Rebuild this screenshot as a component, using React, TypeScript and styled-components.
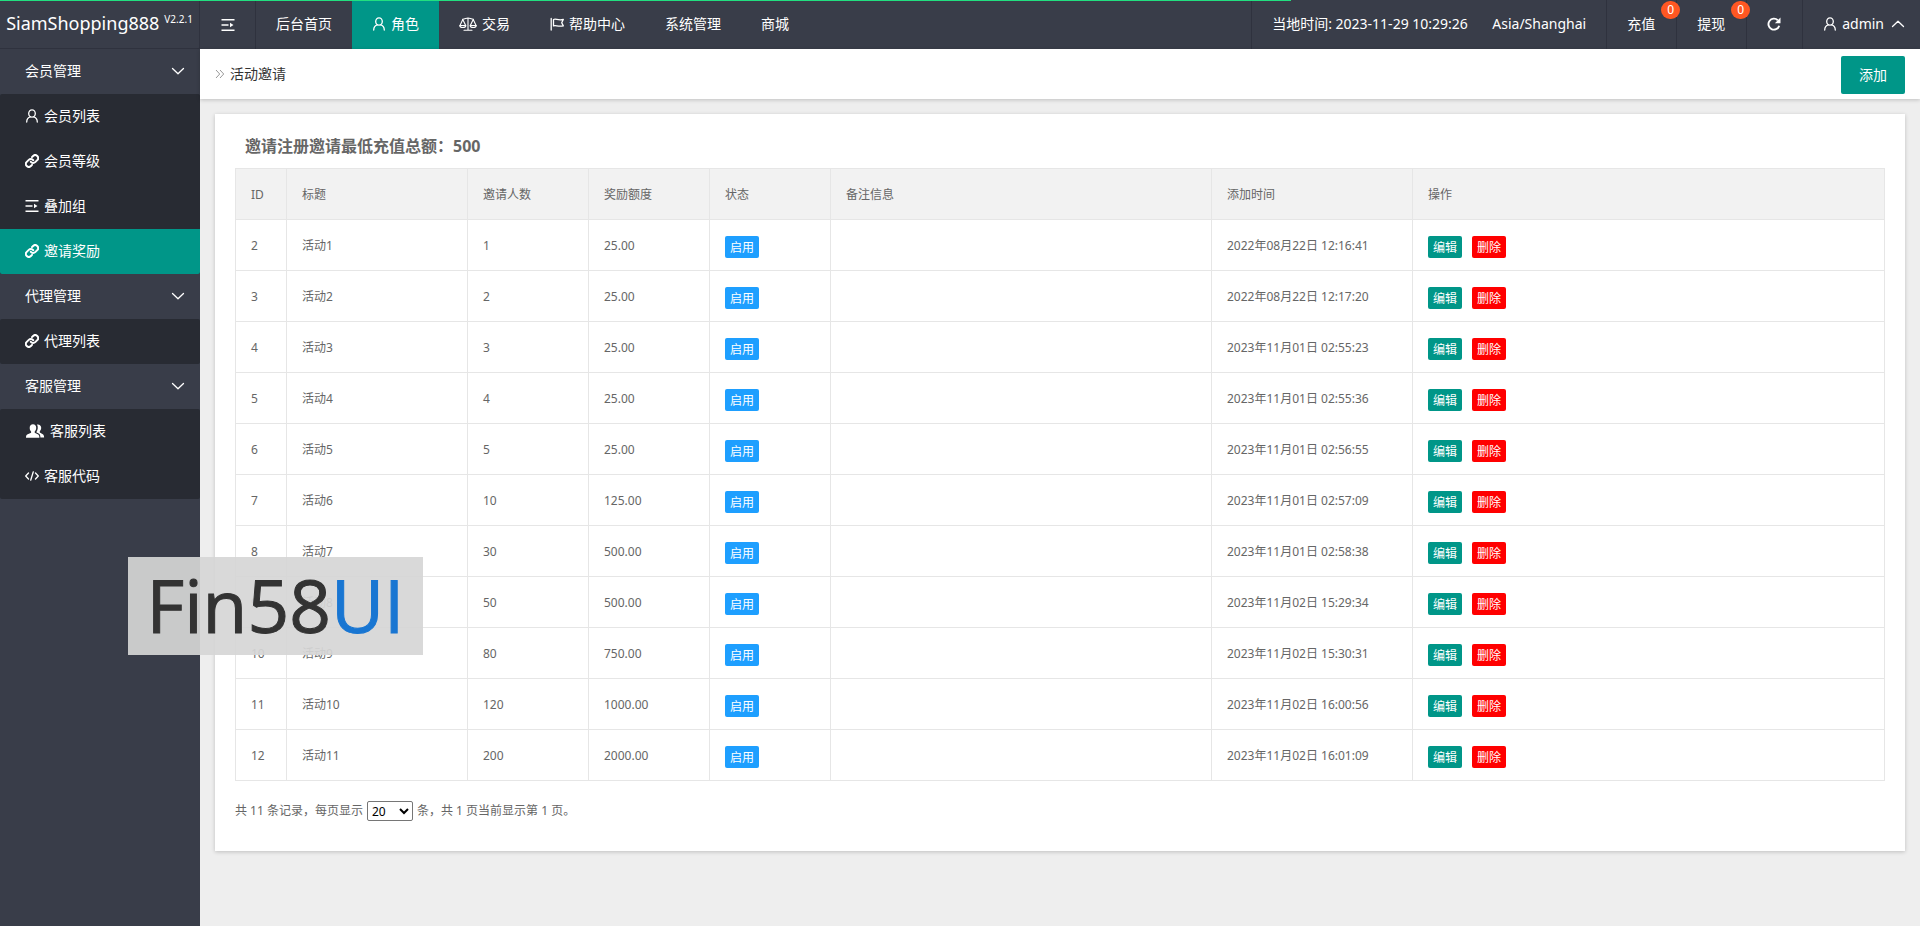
import React from 'react';
import styled, { createGlobalStyle, css } from 'styled-components';

const color = {
  dark: '#393d49',
  darker: '#282b33',
  line: '#2f323e',
  teal: '#009688',
  blue: '#1e9fff',
  red: '#ff0000',
  orange: '#ff5722',
  border: '#e6e6e6',
  text: '#666',
};

const GlobalStyle = createGlobalStyle`
  * { box-sizing: border-box; }
  body {
    margin: 0;
    background: #eee;
    color: ${color.text};
    font: 14px/24px 'Noto Sans', 'Noto Sans CJK SC', sans-serif;
  }
  a { color: inherit; text-decoration: none; }
  button { font: inherit; border: 0; cursor: pointer; }
  ul { margin: 0; padding: 0; list-style: none; }
`;

const Page = styled.div`
  display: flex;
  flex-direction: column;
  min-height: 100vh;
`;

const Progress = styled.div`
  position: absolute;
  top: 0;
  left: 0;
  width: 67.25%;
  height: 1px;
  background: #22df80;
`;

const Header = styled.header`
  display: flex;
  height: 49px;
  background: ${color.dark};
  color: #fff;
`;

const Logo = styled.h1`
  display: flex;
  align-items: center;
  justify-content: center;
  gap: 5px;
  flex: none;
  width: 200px;
  margin: 0;
  padding-bottom: 2px;
  border-right: 1px solid ${color.line};
  border-bottom: 1px solid ${color.line};
  font-size: 18px;
  font-weight: 400;
  sup {
    align-self: flex-start;
    padding-top: 13px;
    font-size: 10px;
    line-height: 12px;
  }
`;

const HeaderNav = styled.nav`
  display: flex;
  flex: 1;
`;

const headerItem = css`
  display: flex;
  align-items: center;
  gap: 5px;
  height: 49px;
  padding: 0 20px 2px;
  white-space: nowrap;
`;

const HeaderLink = styled.a<{ $active?: boolean }>`
  ${headerItem}
  background: ${(p) => (p.$active ? color.teal : 'transparent')};
`;

const Collapse = styled.button`
  ${headerItem}
  justify-content: center;
  width: 56px;
  padding: 0;
  border-right: 1px solid ${color.line};
  background: none;
  color: #fff;
`;

const Tools = styled.div`
  display: flex;
`;

const ToolLink = styled.a`
  ${headerItem}
  position: relative;
  padding-right: 21px;
  border-left: 1px solid ${color.line};
`;

const ToolButton = styled.button`
  ${headerItem}
  padding-right: 21px;
  border-left: 1px solid ${color.line};
  background: none;
  color: #fff;
`;

const Account = styled(ToolLink)`
  padding-right: 15px;
  svg:last-child { margin-left: 2px; }
`;

const Clock = styled.div`
  ${headerItem}
  justify-content: space-between;
  min-width: 355px;
  border-left: 1px solid ${color.line};
`;

const Count = styled.span`
  position: absolute;
  top: 1px;
  right: -4px;
  z-index: 1;
  width: 19px;
  height: 18px;
  border-radius: 9px;
  background: ${color.orange};
  font-size: 12px;
  line-height: 18px;
  text-align: center;
`;

const Body = styled.div`
  display: flex;
  flex: 1;
`;

const Sidebar = styled.aside`
  flex: none;
  width: 200px;
  background: ${color.dark};
  color: #fff;
`;

const GroupTitle = styled.button`
  display: flex;
  align-items: center;
  justify-content: space-between;
  width: 100%;
  height: 45px;
  padding: 0 15px 1px 25px;
  background: none;
  color: #fff;
`;

const SubMenu = styled.ul`
  overflow: hidden;
  border-radius: 2px;
  background: ${color.darker};
`;

const SubLink = styled.a<{ $active?: boolean }>`
  display: flex;
  align-items: center;
  gap: 5px;
  height: 45px;
  padding: 0 0 1px 25px;
  background: ${(p) => (p.$active ? color.teal : 'transparent')};
`;

const Main = styled.main`
  flex: 1;
  min-width: 0;
`;

const TitleBar = styled.div`
  display: flex;
  align-items: center;
  justify-content: space-between;
  height: 50px;
  padding: 0 15px;
  background: #fff;
  box-shadow: 0 1px 4px rgba(0, 0, 0, 0.2);
`;

const Crumb = styled.h2`
  display: flex;
  align-items: center;
  gap: 5px;
  margin: 0;
  color: #333;
  font-size: 14px;
  font-weight: 400;
`;

const AddButton = styled.button`
  height: 38px;
  margin-top: 2px;
  padding: 0 18px 1px;
  border-radius: 2px;
  background: ${color.teal};
  color: #fff;
`;

const Card = styled.section`
  margin: 15px;
  padding: 20px 20px 28px;
  background: #fff;
  box-shadow: 0 1px 4px rgba(0, 0, 0, 0.2);
`;

const CardTitle = styled.h3`
  margin: 0 0 10px;
  padding-left: 10px;
  font-size: 16px;
  line-height: 24px;
  font-weight: 700;
`;

const Table = styled.table`
  width: 100%;
  border-collapse: collapse;
  table-layout: fixed;
  font-size: 12px;
  line-height: 20px;
  th, td {
    height: 51px;
    padding: 2px 15px 0;
    border: 1px solid ${color.border};
    font-weight: 400;
    text-align: left;
  }
  thead { background: #f2f2f2; }
`;

const Actions = styled.div`
  display: flex;
  gap: 10px;
  padding-top: 1px;
`;

const Tag = styled.button<{ $tone: string }>`
  height: 22px;
  padding: 1px 5px 0;
  border-radius: 2px;
  background: ${(p) => p.$tone};
  color: #fff;
  line-height: 21px;
`;

const Pager = styled.div`
  display: flex;
  align-items: center;
  gap: 4px;
  margin-top: 18px;
  font-size: 12px;
  select {
    width: 46px;
    height: 20px;
    padding: 0;
    border: 1px solid #767676;
    border-radius: 2px;
    background: #fff;
    color: #000;
    font: inherit;
    line-height: 16px;
  }
`;

const Watermark = styled.div`
  position: absolute;
  top: 557px;
  left: 128px;
  z-index: 2;
  width: 295px;
  height: 98px;
  background: rgba(214, 214, 214, 0.92);
  color: #333;
  font: 73px/96px 'Open Sans', sans-serif;
  -webkit-text-stroke: 1px currentColor;
  text-align: center;
  span { color: #1976d2; }
`;

const stroke = { fill: 'none', stroke: 'currentColor', strokeLinecap: 'round', strokeLinejoin: 'round' } as const;

const UserIcon = () => (
  <svg width="14" height="14" viewBox="0 0 14 14" {...stroke} strokeWidth="1.3">
    <ellipse cx="7" cy="4.5" rx="3.3" ry="3.7" />
    <path d="M1.7 13c.1-2.9 1.4-4.7 3.6-5.2M8.7 7.8c2.2.5 3.5 2.3 3.6 5.2" />
  </svg>
);
const ShrinkIcon = () => (
  <svg width="14" height="14" viewBox="0 0 14 14" fill="currentColor">
    <path d="M.5 1h13v1.600H.5zM.5 6.200h7v1.600h-7zM.5 11.400h13V13H.5zM9 4.700l3.500 2.300L9 9.300z" />
  </svg>
);
const ScaleIcon = () => (
  <svg width="18" height="14" viewBox="0 0 18 14" {...stroke} strokeWidth="1.1">
    <path d="M9 1v12M5 13.300h8M3.500 2.300C6 2.300 7 1 9 1s3 1.300 5.500 1.300M3.800 2.500 1 8.500M3.800 2.500l2.900 6M14.200 2.500l-2.900 6M14.200 2.500l2.900 6" />
    <path d="M.8 8.500h6c0 2.700-6 2.700-6 0zM11.200 8.500h6c0 2.700-6 2.700-6 0z" />
  </svg>
);
const FlagIcon = () => (
  <svg width="14" height="14" viewBox="0 0 14 14" {...stroke} strokeWidth="1.3">
    <path d="M1.200 1.500v11.500M3.500 2.500c2.500-1.200 4 1.200 9.800 0l-1.600 3.200 1.600 3.200c-5.800 1.200-7.300-1.200-9.800 0z" />
  </svg>
);
const RefreshIcon = () => (
  <svg width="14" height="14" viewBox="0 0 14 14" fill="none" stroke="currentColor" strokeWidth="1.9">
    <path d="M12.200 8.800A5.500 5.500 0 1 1 10.800 3.200" />
    <path d="M13.500.6v5.600H7.900z" fill="currentColor" stroke="none" />
  </svg>
);
const LinkIcon = () => (
  <svg width="14" height="14" viewBox="0 0 24 24" {...stroke} strokeWidth="3.4">
    <path d="M10 13.500a5 5 0 0 0 7.500.5l3.500-3.500a5 5 0 0 0-7.100-7.100l-2 2" />
    <path d="M14 10.500a5 5 0 0 0-7.500-.5L3 13.500a5 5 0 0 0 7.100 7.100l2-2" />
  </svg>
);
const GroupIcon = () => (
  <svg width="20" height="14" viewBox="0 0 20 14" fill="currentColor">
    <path d="M8 .3c2 0 3.200 1.500 3.200 3.400 0 1.600-.7 2.900-1.500 3.700v1.300l3.500 1.700c.8.400 1.200 1.600 1.200 3.300H1c0-1.800.4-2.900 1.200-3.300l3.900-1.700V7.400C5.200 6.600 4.700 5.300 4.700 3.700 4.700 1.800 6 .3 8 .3z" />
    <path d="M12 .5c2.400-.4 4.200 1 4.200 3.300 0 1.500-.6 2.700-1.400 3.500v1.200l3 1.700c.9.500 1.300 1.700 1.300 3.400h-3.700c0-2.300-.5-3.500-1.700-4.100L11.300 8.200c1.700-2.600 2-5.500.7-7.700z" />
  </svg>
);
const CodeIcon = () => (
  <svg width="14" height="14" viewBox="0 0 14 14" {...stroke} strokeWidth="1.3">
    <path d="M3.500 4 .7 7l2.800 3M10.500 4l2.800 3-2.800 3M8.300 2.800 5.700 11.200" />
  </svg>
);
const Chevron = ({ up = false }: { up?: boolean }) => (
  <svg width="14" height="14" viewBox="0 0 14 14" {...stroke} strokeWidth="1.3">
    <path d={up ? 'M1.500 9.500 7 4.200l5.500 5.300' : 'M1.500 4.500 7 9.800l5.500-5.300'} />
  </svg>
);
const DoubleArrow = () => (
  <svg width="10" height="12" viewBox="0 0 10 12" fill="none" stroke="#999" strokeWidth="1">
    <path d="M1 2l3.700 4L1 10M5 2l3.700 4L5 10" />
  </svg>
);

const topLinks = [
  { label: '后台首页' },
  { label: '角色', icon: <UserIcon />, active: true },
  { label: '交易', icon: <ScaleIcon /> },
  { label: '帮助中心', icon: <FlagIcon /> },
  { label: '系统管理' },
  { label: '商城' },
];

const groups = [
  {
    title: '会员管理',
    items: [
      { label: '会员列表', icon: <UserIcon /> },
      { label: '会员等级', icon: <LinkIcon /> },
      { label: '叠加组', icon: <ShrinkIcon /> },
      { label: '邀请奖励', icon: <LinkIcon />, active: true },
    ],
  },
  { title: '代理管理', items: [{ label: '代理列表', icon: <LinkIcon /> }] },
  {
    title: '客服管理',
    items: [
      { label: '客服列表', icon: <GroupIcon /> },
      { label: '客服代码', icon: <CodeIcon /> },
    ],
  },
];

const columns: [string, number?][] = [
  ['ID', 51],
  ['标题', 181],
  ['邀请人数', 121],
  ['奖励额度', 121],
  ['状态', 121],
  ['备注信息', 381],
  ['添加时间', 201],
  ['操作'],
];

const Col = styled.col<{ $width?: number }>`
  width: ${(p) => (p.$width ? `${p.$width}px` : 'auto')};
`;

const rows: [number, number, string, string][] = [
  [2, 1, '25.00', '2022年08月22日 12:16:41'],
  [3, 2, '25.00', '2022年08月22日 12:17:20'],
  [4, 3, '25.00', '2023年11月01日 02:55:23'],
  [5, 4, '25.00', '2023年11月01日 02:55:36'],
  [6, 5, '25.00', '2023年11月01日 02:56:55'],
  [7, 10, '125.00', '2023年11月01日 02:57:09'],
  [8, 30, '500.00', '2023年11月01日 02:58:38'],
  [9, 50, '500.00', '2023年11月02日 15:29:34'],
  [10, 80, '750.00', '2023年11月02日 15:30:31'],
  [11, 120, '1000.00', '2023年11月02日 16:00:56'],
  [12, 200, '2000.00', '2023年11月02日 16:01:09'],
];

export default function App() {
  return (
    <Page lang="zh-CN">
      <GlobalStyle />
      <Header>
        <Logo>
          SiamShopping888<sup>V2.2.1</sup>
        </Logo>
        <HeaderNav>
          <Collapse aria-label="收起菜单">
            <ShrinkIcon />
          </Collapse>
          {topLinks.map((l) => (
            <HeaderLink key={l.label} href="#" $active={l.active}>
              {l.icon}
              {l.label}
            </HeaderLink>
          ))}
        </HeaderNav>
        <Tools>
          <Clock>
            <span>当地时间: 2023-11-29 10:29:26</span>
            <span>Asia/Shanghai</span>
          </Clock>
          <ToolLink href="#">
            充值<Count>0</Count>
          </ToolLink>
          <ToolLink href="#">
            提现<Count>0</Count>
          </ToolLink>
          <ToolButton aria-label="刷新">
            <RefreshIcon />
          </ToolButton>
          <Account href="#">
            <UserIcon />
            admin
            <Chevron up />
          </Account>
        </Tools>
      </Header>
      <Progress />
      <Body>
        <Sidebar>
          {groups.map((g) => (
            <div key={g.title}>
              <GroupTitle>
                {g.title}
                <Chevron />
              </GroupTitle>
              <SubMenu>
                {g.items.map((item) => (
                  <li key={item.label}>
                    <SubLink href="#" $active={'active' in item && item.active}>
                      {item.icon}
                      {item.label}
                    </SubLink>
                  </li>
                ))}
              </SubMenu>
            </div>
          ))}
        </Sidebar>
        <Main>
          <TitleBar>
            <Crumb>
              <DoubleArrow />
              活动邀请
            </Crumb>
            <AddButton>添加</AddButton>
          </TitleBar>
          <Card>
            <CardTitle>邀请注册邀请最低充值总额：500</CardTitle>
            <Table>
              <colgroup>
                {columns.map(([name, width]) => (
                  <Col key={name} $width={width} />
                ))}
              </colgroup>
              <thead>
                <tr>
                  {columns.map(([name]) => (
                    <th key={name} scope="col">{name}</th>
                  ))}
                </tr>
              </thead>
              <tbody>
                {rows.map(([id, people, reward, time], i) => (
                  <tr key={id}>
                    <td>{id}</td>
                    <td>{`活动${i + 1}`}</td>
                    <td>{people}</td>
                    <td>{reward}</td>
                    <td>
                      <Actions>
                        <Tag $tone={color.blue}>启用</Tag>
                      </Actions>
                    </td>
                    <td />
                    <td>{time}</td>
                    <td>
                      <Actions>
                        <Tag $tone={color.teal}>编辑</Tag>
                        <Tag $tone={color.red}>删除</Tag>
                      </Actions>
                    </td>
                  </tr>
                ))}
              </tbody>
            </Table>
            <Pager>
              <label htmlFor="page-size">共 11 条记录，每页显示</label>
              <select id="page-size" defaultValue="20">
                <option>20</option>
                <option>50</option>
                <option>100</option>
              </select>
              <span>条，共 1 页当前显示第 1 页。</span>
            </Pager>
          </Card>
        </Main>
      </Body>
      <Watermark>
        Fin58<span>UI</span>
      </Watermark>
    </Page>
  );
}
